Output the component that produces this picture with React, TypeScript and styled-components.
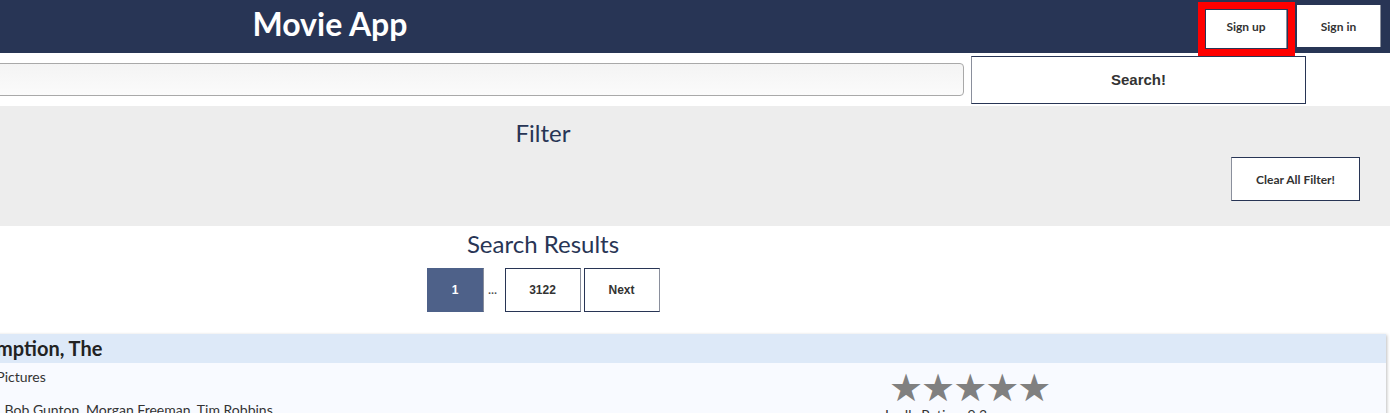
import styled, { createGlobalStyle } from "styled-components";

const navy = "#283555";

const GlobalStyle = createGlobalStyle`
  html, body {
    margin: 0;
    padding: 0;
    overflow: hidden;
    background: #ffffff;
    font-family: Lato, "Noto Sans", sans-serif;
  }
`;

// the page is scrolled sideways in the shot, so the whole thing sits 300px to the left
const Page = styled.div`
  width: 1686px;
  margin-left: -300px;
`;

const Header = styled.header`
  width: calc(100% + 4px);
  height: 53px;
  background: ${navy};
  display: flex;
  align-items: flex-end;
  padding-bottom: 6px;
  box-sizing: border-box;
`;

const AppTitle = styled.h1`
  flex: 0 0 1260px;
  margin: 0;
  align-self: center;
  text-align: center;
  color: #ffffff;
  font-size: 32px;
  font-weight: 700;
  line-height: 53px;
`;

const AuthBox = styled.div`
  margin-left: auto;
  margin-right: 9px;
  display: flex;
  align-items: flex-end;
  gap: 10px;
`;

const AuthButton = styled.button<{ $marked?: boolean }>`
  width: ${(p) => (p.$marked ? "81px" : "84px")};
  height: ${(p) => (p.$marked ? "38px" : "42px")};
  margin-bottom: ${(p) => (p.$marked ? "-1px" : "0")};
  padding: 0 0 ${(p) => (p.$marked ? "6px" : "0")};
  background: #ffffff;
  border: none;
  border-right: 1px solid #8a8f9c;
  font-family: Lato, sans-serif;
  font-weight: 700;
  font-size: 12px;
  color: #333333;
  outline: ${(p) => (p.$marked ? "7px solid #ff0000" : "none")};
  outline-offset: 1px;
`;

const SearchRow = styled.div`
  height: 53px;
  display: flex;
  align-items: center;
  gap: 7px;
`;

const SearchInput = styled.input`
  flex: 1;
  height: 33px;
  box-sizing: border-box;
  border: 1px solid #a9a9a9;
  border-radius: 4px;
  background: linear-gradient(#f4f4f4, #fbfbfb);
  margin-left: 10px;
`;

const SearchButton = styled.button`
  width: 335px;
  height: 48px;
  margin-right: 80px;
  background: #ffffff;
  border: 1px solid ${navy};
  border-left-color: #8a8f9c;
  font-family: "Liberation Sans", Arial, sans-serif;
  font-weight: 700;
  font-size: 15px;
  color: #333333;
`;

const FilterPanel = styled.section`
  width: calc(100% + 4px);
  height: 120px;
  background: #ededed;
  display: flex;
  flex-direction: column;
  box-sizing: border-box;
  padding-top: 13px;
`;

const SectionTitle = styled.h2`
  margin: 0;
  align-self: center;
  font-size: 24px;
  font-weight: 400;
  color: ${navy};
  line-height: 28px;
`;

const FilterTitle = styled(SectionTitle)`
  margin-right: 4px;
`;

const ClearButton = styled.button`
  align-self: flex-end;
  margin-right: 30px;
  margin-top: 10px;
  width: 129px;
  height: 44px;
  background: #ffffff;
  border: 1px solid ${navy};
  border-left-color: #8a8f9c;
  font-family: Lato, sans-serif;
  font-weight: 700;
  font-size: 12px;
  color: #333333;
`;

const Results = styled.section`
  display: flex;
  flex-direction: column;
  align-items: center;
  padding-top: 4px;
`;

const Pager = styled.nav`
  display: flex;
  align-items: center;
  margin-top: 10px;
  margin-right: 3px;
`;

const PageButton = styled.button<{ $active?: boolean }>`
  width: ${(p) => (p.$active ? "57px" : "76px")};
  height: 44px;
  margin-left: 3px;
  background: ${(p) => (p.$active ? "#4e6189" : "#ffffff")};
  border: 1px solid ${(p) => (p.$active ? "#4e6189" : navy)};
  border-right-color: #8a8f9c;
  font-family: "Liberation Sans", Arial, sans-serif;
  font-weight: 700;
  font-size: 12px;
  color: ${(p) => (p.$active ? "#ffffff" : "#333333")};
`;

const Dots = styled.span`
  width: 18px;
  text-align: center;
  font-family: "Liberation Sans", Arial, sans-serif;
  font-weight: 700;
  font-size: 11px;
  color: #555555;
`;

const Card = styled.article`
  margin-top: 22px;
  background: #f8faff;
  box-shadow: 1px 1px 3px rgba(0, 0, 0, 0.25);
`;

const CardHead = styled.h3`
  margin: 0;
  height: 29px;
  background: #dde9f8;
  padding-left: 146px;
  font-size: 20px;
  font-weight: 700;
  color: #222222;
  line-height: 29px;
`;

const CardBody = styled.div`
  display: grid;
  grid-template-columns: 1030px 1fr;
  padding: 6px 0 0 160px;
  height: 60px;
`;

const Facts = styled.div`
  display: flex;
  flex-direction: column;
  font-size: 14px;
  color: #333333;
  line-height: 16.5px;
`;

const Rating = styled.div`
  display: flex;
  flex-direction: column;
  margin-left: -5px;
`;

const Stars = styled.div`
  color: #808080;
  font-size: 38px;
  line-height: 38px;
  letter-spacing: -2px;
  margin-left: 4px;
  font-family: "DejaVu Sans", sans-serif;
`;

const RatingText = styled.span`
  font-size: 14px;
  color: #333333;
  line-height: 16px;
`;

export default function App() {
  return (
    <>
      <GlobalStyle />
      <Page>
        <Header>
          <AppTitle>Movie App</AppTitle>
          <AuthBox>
            <AuthButton $marked>Sign up</AuthButton>
            <AuthButton>Sign in</AuthButton>
          </AuthBox>
        </Header>
        <SearchRow>
          <SearchInput />
          <SearchButton>Search!</SearchButton>
        </SearchRow>
        <FilterPanel>
          <FilterTitle>Filter</FilterTitle>
          <ClearButton>Clear All Filter!</ClearButton>
        </FilterPanel>
        <Results>
          <SectionTitle>Search Results</SectionTitle>
          <Pager>
            <PageButton $active>1</PageButton>
            <Dots>...</Dots>
            <PageButton>3122</PageButton>
            <PageButton>Next</PageButton>
          </Pager>
        </Results>
        <Card>
          <CardHead>Shawshank Redemption, The</CardHead>
          <CardBody>
            <Facts>
              <span>Production: Columbia Pictures</span>
              <span>1994</span>
              <span>Actors : William Sadler, Bob Gunton, Morgan Freeman, Tim Robbins</span>
            </Facts>
            <Rating>
              <Stars>★★★★★</Stars>
              <RatingText>Imdb-Rating: 9.3</RatingText>
            </Rating>
          </CardBody>
        </Card>
      </Page>
    </>
  );
}
